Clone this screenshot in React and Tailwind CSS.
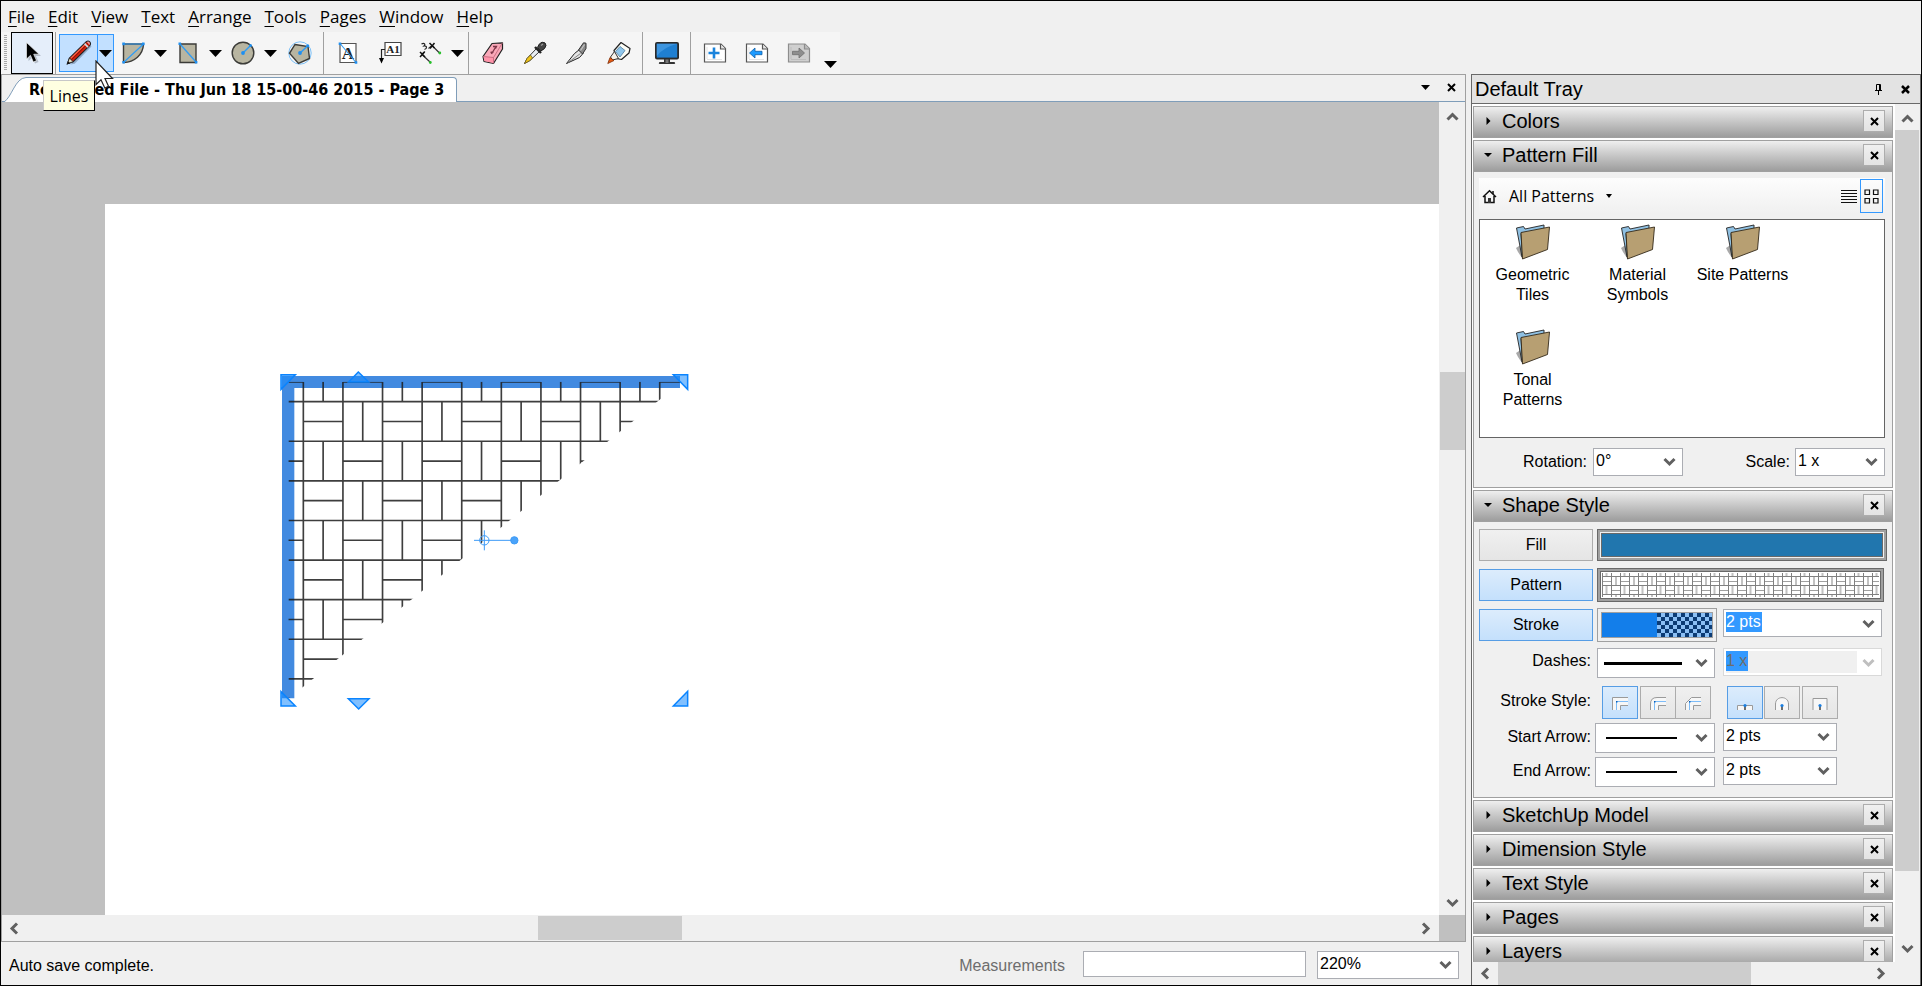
import React, { useState } from "react";

const ARIAL = "font-['Liberation_Sans',Arial,sans-serif]";
const SEGOE = "font-['Open_Sans','Segoe_UI',sans-serif]";

const MENUS = ["File", "Edit", "View", "Text", "Arrange", "Tools", "Pages", "Window", "Help"];
const FOLDERS = ["Geometric Tiles", "Material Symbols", "Site Patterns", "Tonal Patterns"];
const CLOSED_PANELS = ["SketchUp Model", "Dimension Style", "Text Style", "Pages", "Layers"];

/* ---------- small glyphs ---------- */

const CHEVRON_PATHS = {
  up: "M1.5 8.5 6.5 3.5 11.5 8.5",
  down: "M1.5 4 6.5 9 11.5 4",
  left: "M9 1.5 4 6.5 9 11.5",
  right: "M4 1.5 9 6.5 4 11.5",
};

const Chevron = ({ dir = "down", color = "#606060" }) => (
  <svg width="13" height="13" viewBox="0 0 13 13" fill="none" stroke={color} strokeWidth="3">
    <path d={CHEVRON_PATHS[dir]} />
  </svg>
);

const Cross = ({ size = 9, weight = 2 }) => (
  <svg width={size} height={size} viewBox="0 0 9 9" stroke="#000" strokeWidth={weight}>
    <path d="M1 1 8 8M8 1 1 8" />
  </svg>
);

const DropTriangle = ({ wide = 13, high = 7 }) => (
  <svg width={wide} height={high} viewBox="0 0 12 6" preserveAspectRatio="none">
    <path d="M0 0H12L6 6Z" fill="#000" />
  </svg>
);

/* ---------- toolbar icons ---------- */

const Icon = ({ children, size = 24 }) => (
  <svg width={size} height={size} viewBox="0 0 24 24" fill="none">
    {children}
  </svg>
);

const SelectIcon = () => (
  <Icon>
    <path d="M8.500 3v17l4-3.500 2.500 6 3.500-1.500-2.600-6H21z" fill="#b4bcc8" />
    <path d="M6.500 1.500v16.500l4-3.700 2.800 6.700 3.200-1.400-2.800-6.400h5.300z" fill="#000" stroke="#fff" strokeWidth=".6" />
  </Icon>
);

const PencilIcon = () => (
  <Icon size={26}>
    <path d="M4 22.500 22.500 4.500 23.500 6 8 22z" fill="#8fa9c6" />
    <path d="M1.200 22 3.200 16.600 18.700 1.600Q20.500.4 21.900 1.800 23.300 3.300 22 5L6.600 20z" fill="#d8210c" stroke="#222" strokeWidth="1" />
    <path d="M4.800 18.300 20.300 3.200" stroke="#8e1206" strokeWidth="1" />
    <path d="M4.400 16.900 17.500 4.200" stroke="#ff6a4d" strokeWidth="1" />
    <path d="m17.200 3.400 3.100 3.200" stroke="#d8dde2" strokeWidth="1.600" />
    <path d="M19.200 1.800Q20.700 1 21.600 2.100 22.600 3.300 21.700 4.600z" fill="#eb9ba0" />
    <path d="M1.200 22 3.200 16.600 6.600 20z" fill="#e6dfc0" stroke="#222" strokeWidth=".8" />
    <path d="M1 22.300 1.900 19.600 3.800 21.400z" fill="#111" />
  </Icon>
);

const ArcIcon = () => (
  <Icon>
    <path d="M2.500 3H22.500C22 14 13.500 21 2.500 21.500Z" fill="#b8b5a1" stroke="#3b3b38" strokeWidth="1.400" />
    <path d="M2.500 21.500 22.500 3M2.500 3H22.500" stroke="#2f9cf5" strokeWidth="1.200" />
    <path d="M1.300 1.600h2.600v2.600H1.300zM21 1.600h2.600v2.600H21zM1.300 20h2.600v2.600H1.300z" fill="#1f8ff0" />
  </Icon>
);

const RectIcon = () => (
  <Icon>
    <path d="M4 3H20V21.500H4Z" fill="#b8b5a1" stroke="#3b3b38" strokeWidth="1.400" />
    <path d="M4 3 20 21" stroke="#2f9cf5" strokeWidth="1.300" />
    <path d="M2.500 1.500h2.600v2.600H2.500zM18.800 20h2.600v2.600h-2.600z" fill="#1f8ff0" />
  </Icon>
);

const CircleIcon = () => (
  <Icon>
    <circle cx="12" cy="12" r="10.800" fill="#b8b5a1" stroke="#3b3b38" strokeWidth="1.400" />
    <path d="M12 12 19.500 4.500" stroke="#2f9cf5" strokeWidth="1.500" />
    <circle cx="12" cy="12" r="1.900" fill="#1f8ff0" />
    <circle cx="19.500" cy="4.500" r="1.500" fill="#1f8ff0" />
  </Icon>
);

const PolygonIcon = () => (
  <Icon>
    <circle cx="12" cy="12" r="11.200" stroke="#7cc0f7" strokeWidth="1" />
    <path d="M7 3.500 20 5.500 21.500 17.500 10.500 22.500 1.500 12.300Z" fill="#b8b5a1" stroke="#3b3b38" strokeWidth="1.400" />
    <path d="M12 12 19.800 4.700" stroke="#2f9cf5" strokeWidth="1.500" />
    <circle cx="12" cy="12" r="1.900" fill="#1f8ff0" />
    <circle cx="19.800" cy="4.700" r="1.500" fill="#1f8ff0" />
  </Icon>
);

const TextIcon = () => (
  <Icon>
    <path d="M4 2.500H20V21.500H4Z" fill="#fff" stroke="#555" strokeWidth="1.200" />
    <text x="12" y="18" textAnchor="middle" fontSize="17" fontFamily="Liberation Serif, serif" fontWeight="bold" fill="#222">A</text>
    <path d="M4 2.500 20 21.500" stroke="#2f9cf5" strokeWidth="1.100" />
    <path d="M2.700 1.500h2.600v2.600H2.700zM18.700 20.200h2.600v2.600h-2.600z" fill="#1f8ff0" />
  </Icon>
);

const LabelIcon = () => (
  <Icon>
    <path d="M7 1.500H23V14.500H7Z" fill="#fff" stroke="#444" strokeWidth="1.200" />
    <text x="15" y="12" textAnchor="middle" fontSize="11" fontFamily="Liberation Serif, serif" fontWeight="bold" fill="#222">A1</text>
    <path d="M7 8.500H3.500V18" stroke="#222" strokeWidth="1.200" />
    <path d="M1 17H6L3.500 22.500Z" fill="#000" />
  </Icon>
);

const DimensionIcon = () => (
  <Icon>
    <path d="M4 13 7 10.500M10.500 7.500 14 4.500M14 4.500 21.500 12M4 13.500 12 21" stroke="#333" strokeWidth="1.200" />
    <path d="m2 11 5 5m-5 0 4.500-5m5-9 5 5m-4.500.5L16.500 2" stroke="#111" strokeWidth="1.500" />
    <path d="M3.500 3C6 1.500 8 3 6 5 9 4.500 9.500 7.500 6.500 8.500" stroke="#222" strokeWidth="1.200" />
    <circle cx="21.800" cy="12" r="1.400" fill="#27c02b" />
    <circle cx="12.300" cy="21.500" r="1.400" fill="#27c02b" />
  </Icon>
);

const EraserIcon = () => (
  <Icon>
    <path d="M2 15.500 11 2.500 21.500 1.800 21.500 8 12.500 22.500 3 20.500Z" fill="#f9a8b8" stroke="#222" strokeWidth="1.200" strokeLinejoin="round" />
    <path d="M2.500 15.500 12.500 16.500 12.500 22 3.300 20Z" fill="#ff93a9" />
    <path d="M2 15.500 12.500 16.500 21.500 1.800M12.500 16.500V22.500" stroke="#c46a7e" strokeWidth=".9" />
    <path d="m10.500 13 4.500-7.500M12 5.500h3.500l-1 2M9.500 11.500l3-.500" stroke="#7d3547" strokeWidth="1.300" />
  </Icon>
);

const DropperIcon = () => (
  <Icon>
    <path d="M1.500 22.500 4 17.500 13.500 7.500 16.500 10.500 7 19.500Z" fill="#e9eef2" stroke="#333" strokeWidth="1" />
    <path d="M1.500 22.500 4 17.500 7.500 14 9.500 17 6.500 19.800Z" fill="#f0c419" stroke="#6b5a13" strokeWidth=".7" />
    <path d="m12 6 6 6" stroke="#222" strokeWidth="2.400" />
    <path d="M14.500 6.500Q16 2 19 1.200 23 1 23 4.500 22.500 8 17.800 10Z" fill="#444" stroke="#222" />
    <path d="M18 4.500 20 3" stroke="#9a9a9a" strokeWidth="1.300" />
  </Icon>
);

const KnifeIcon = () => (
  <Icon>
    <path d="M1.500 22.500 9.500 12.500 14.500 8.500 18 12.500 14.500 16.500Z" fill="#e4e4e4" stroke="#222" strokeWidth="1" />
    <path d="M2.500 22 15.500 12.500" stroke="#777" strokeWidth=".9" />
    <path d="M13.500 9 18.500 1.800 21 2.200V7.500L17.500 13Z" fill="#8a8a8a" stroke="#333" strokeWidth="1" />
    <path d="M15.500 9.500 19.500 3.500" stroke="#c9c9c9" strokeWidth="1.100" />
  </Icon>
);

const GlueIcon = () => (
  <Icon>
    <path d="M7 9.500 14 1.500 23 7.500 22 12 14.500 18.500 9.500 17.500Z" fill="#fdfdf6" stroke="#222" strokeWidth="1.200" strokeLinejoin="round" />
    <path d="M8.500 10.500 13 5.500 18 9.500 13 16Z" fill="#8fc6ec" stroke="#5d87a6" strokeWidth=".9" />
    <path d="M3.500 16 7.500 10.500 11.500 17.500 5.500 19Z" fill="#f7f2ea" stroke="#333" strokeWidth="1" />
    <path d="M.8 22.500 3 16.500 7 19.500Z" fill="#e85b13" stroke="#7b2c06" strokeWidth=".8" />
  </Icon>
);

const MonitorIcon = () => (
  <Icon>
    <rect x="0" y="1" width="24" height="17.500" rx="2" fill="#2a2a2a" />
    <rect x="1.800" y="2.800" width="20.400" height="13.800" fill="#1f7fd1" />
    <path d="M1.800 2.800H22.200Q9 6 1.800 15Z" fill="#3d95df" />
    <path d="M9 18h6v3h4.500q1.500 1.500 0 2h-15q-1.500-.5 0-2H9z" fill="#333" />
    <path d="M10.500 18.500h3V22h-3z" fill="#777" />
  </Icon>
);

const PageBase = ({ children, muted }) => (
  <Icon>
    <path d="M1.500 3H18l4.500 4.500V21H1.500Z" fill={muted ? "#cfcfcf" : "#fff"} stroke={muted ? "#8d8d8d" : "#555"} strokeWidth="1.200" />
    <path d="M17.500 3V8H22.500" fill={muted ? "#bcbcbc" : "#e6e6e6"} stroke={muted ? "#8d8d8d" : "#555"} strokeWidth="1.200" />
    <path d="M4 18.500h15M4 6v12" stroke={muted ? "#bdbdbd" : "#e3e3e3"} />
    {children}
  </Icon>
);

const AddPageIcon = () => (
  <PageBase>
    <path d="M11 6.500V17.500M5.500 12H16.500" stroke="#1a83dc" strokeWidth="2.600" />
  </PageBase>
);

const PrevPageIcon = () => (
  <PageBase>
    <path d="M4.500 12 10 7V10.300H17V13.700H10V17Z" fill="#1e9bff" stroke="#0f5fa8" strokeWidth=".8" />
  </PageBase>
);

const NextPageIcon = () => (
  <PageBase muted>
    <path d="M17.500 12 12 7V10.300H5.500V13.700H12V17Z" fill="#8e8e8e" stroke="#6f6f6f" strokeWidth=".8" />
  </PageBase>
);

/* ---------- toolbar ---------- */

const ToolButton = ({ label, children, disabled }) => (
  <button type="button" aria-label={label} disabled={disabled} className="flex h-[42px] w-[42px] items-center justify-center">
    {children}
  </button>
);

const SplitButton = ({ label, active, children }) => (
  <div className="flex h-[42px] items-center">
    <button
      type="button"
      aria-label={label}
      className={`flex h-[38px] w-[38px] items-center justify-center ${active ? "border-y border-l border-[#3399ff] bg-[#c2e0ff]" : ""}`}
    >
      {children}
    </button>
    <button
      type="button"
      aria-label={`${label} options`}
      className={`flex h-[38px] w-[17px] items-center justify-center ${active ? "border border-[#3399ff] bg-[#c2e0ff]" : ""}`}
    >
      <DropTriangle />
    </button>
  </div>
);

const Separator = () => <div className="mr-[3px] ml-[2px] h-full w-px bg-[#a0a0a0]" />;

const Toolbar = () => (
  <div className="flex h-[42px] w-[839px] items-center bg-[#f5f5f5]">
    <div className="mr-1 ml-[3px] h-9 w-[3px] bg-[repeating-linear-gradient(to_bottom,#a8a8a8_0_1px,#f5f5f5_1px_2px)]" />
    <button type="button" aria-label="Select" className="flex h-[42px] w-[42px] items-center justify-center border border-black bg-[#e5eefa]">
      <SelectIcon />
    </button>
    <Separator />
    <SplitButton label="Lines" active>
      <PencilIcon />
    </SplitButton>
    <SplitButton label="Arcs">
      <ArcIcon />
    </SplitButton>
    <SplitButton label="Rectangles">
      <RectIcon />
    </SplitButton>
    <SplitButton label="Circles">
      <CircleIcon />
    </SplitButton>
    <ToolButton label="Polygons">
      <PolygonIcon />
    </ToolButton>
    <Separator />
    <ToolButton label="Text">
      <TextIcon />
    </ToolButton>
    <ToolButton label="Label">
      <LabelIcon />
    </ToolButton>
    <SplitButton label="Dimensions">
      <DimensionIcon />
    </SplitButton>
    <Separator />
    <ToolButton label="Erase">
      <EraserIcon />
    </ToolButton>
    <ToolButton label="Style">
      <DropperIcon />
    </ToolButton>
    <ToolButton label="Split">
      <KnifeIcon />
    </ToolButton>
    <ToolButton label="Join">
      <GlueIcon />
    </ToolButton>
    <Separator />
    <ToolButton label="Start presentation">
      <MonitorIcon />
    </ToolButton>
    <Separator />
    <ToolButton label="Add page">
      <AddPageIcon />
    </ToolButton>
    <ToolButton label="Previous page">
      <PrevPageIcon />
    </ToolButton>
    <ToolButton label="Next page" disabled>
      <NextPageIcon />
    </ToolButton>
    <button type="button" aria-label="Toolbar options" className="flex h-full w-5 items-end justify-center pb-[6px]">
      <DropTriangle />
    </button>
  </div>
);

/* ---------- drawing ---------- */

// Basket weave, one cell is 118.8 units, three units to a pixel
const CELL = 118.8;
const weave = [];
for (let c = 0; c < 10; c++) {
  const x = 100 + c * CELL;
  weave.push(`M${x} 66V1020`);
}
for (let r = 0; r < 8; r++) {
  const y = 125 + r * CELL;
  weave.push(`M55 ${y}H1240`);
}
for (let r = -1; r < 8; r++) {
  for (let c = -1; c < 10; c++) {
    const x = 100 + c * CELL;
    const y = 125 + r * CELL;
    if ((r + c) % 2 === 0) {
      weave.push(`M${x} ${y + CELL / 2}h${CELL}`);
    } else {
      weave.push(`M${x + CELL / 2} ${y}v${CELL}`);
    }
  }
}

const Drawing = () => (
  <svg width="430" height="360" viewBox="0 0 1290 1080" fill="none" className="absolute top-[156px] left-[165px]">
    <clipPath id="triangle">
      <path d="M55 65H1236L55 1016Z" />
    </clipPath>
    <path d="M36 48H1230V84H73V1015H36Z" fill="#428ae0" />
    <path d={weave.join("")} stroke="#1c1c1c" strokeOpacity=".85" strokeWidth="5" clipPath="url(#triangle)" />
    <g fill="#1a8cff" fillOpacity=".55" stroke="#0a84ff" strokeWidth="4.500">
      <path d="M33 44H76L33 88Z" />
      <path d="M265 36 236 66H296Z" />
      <path d="M1210 44H1253V88Z" />
      <path d="M33 995V1038H76Z" />
      <path d="M235 1016H297L266 1047Z" />
      <path d="M1253 994V1038H1210Z" />
    </g>
    <g stroke="#3d9bf7" strokeWidth="3">
      <circle cx="643" cy="541" r="14" />
      <path d="M612 541H733M643 511V571" />
      <circle cx="733" cy="541" r="11" fill="#4aa3fa" />
    </g>
  </svg>
);

const ScrollButton = ({ dir, className }) => (
  <button type="button" aria-label={`Scroll ${dir}`} className={`flex shrink-0 items-center justify-center ${className}`}>
    <Chevron dir={dir} />
  </button>
);

const DocumentView = () => (
  <section className="flex min-h-0 flex-1 flex-col border border-[#a0a0a0]">
    <div className="flex h-[27px] shrink-0 items-end border-b border-[#7f9db9]">
      <div className="-mb-px ml-[2px] flex h-[25px]">
        <svg width="22" height="25" viewBox="0 0 22 25">
          <path d="M0 25C8 20 11 1 22 .5V25Z" fill="#fff" />
          <path d="M0 25C8 20 11 1 22 .5" fill="none" stroke="#7f9db9" />
        </svg>
        <div className="flex items-center rounded-tr border-t border-r border-[#7f9db9] bg-white pr-3 pb-px pl-[3px] font-['DejaVu_Sans_Condensed','DejaVu_Sans',Tahoma,sans-serif] text-base leading-5 font-bold whitespace-nowrap">
          Recovered File - Thu Jun 18 15-00-46 2015 - Page 3
        </div>
      </div>
      <div className="ml-auto flex h-full items-center gap-[17px] pr-[9px] pb-[2px]">
        <button type="button" aria-label="Open documents">
          <DropTriangle wide={9} high={5} />
        </button>
        <button type="button" aria-label="Close document">
          <Cross />
        </button>
      </div>
    </div>
    <div className="flex min-h-0 flex-1">
      <div className="flex min-w-0 flex-1 flex-col">
        <div className="min-h-0 flex-1 overflow-hidden bg-[#c0c0c0] pt-[102px] pl-[103px]">
          <div className="relative h-full bg-white">
            <Drawing />
          </div>
        </div>
        <div className="flex h-[26px] items-center bg-[#f0f0f0]">
          <ScrollButton dir="left" className="h-full w-6" />
          <div className="flex h-6 flex-1">
            <div className="h-full w-[37%]" />
            <div className="h-full w-[144px] bg-[#cdcdcd]" />
          </div>
          <ScrollButton dir="right" className="h-full w-7" />
        </div>
      </div>
      <div className="flex w-[26px] flex-col bg-[#f0f0f0]">
        <ScrollButton dir="up" className="h-[30px]" />
        <div className="flex flex-1 flex-col items-end pt-60">
          <div className="h-[78px] w-[25px] bg-[#cdcdcd]" />
        </div>
        <ScrollButton dir="down" className="h-[26px]" />
        <div className="h-[26px] bg-[#c0c0c0]" />
      </div>
    </div>
  </section>
);

/* ---------- form pieces ---------- */

const Select = ({ id, label, value, options, className }) => {
  const [current, setCurrent] = useState(value);
  return (
    <div className={`relative h-7 border border-[#abadb3] bg-white ${className}`}>
      <select
        id={id}
        aria-label={label}
        value={current}
        onChange={(e) => setCurrent(e.target.value)}
        className="h-[23px] w-full appearance-none bg-transparent px-[2px] text-base leading-5 outline-none"
      >
        {options.map((o) => (
          <option key={o}>{o}</option>
        ))}
      </select>
      <span className="pointer-events-none absolute top-[6px] right-[6px]">
        <Chevron />
      </span>
    </div>
  );
};

// Drop-down whose value is drawn as a line
const LineSelect = ({ id, thick, className }) => (
  <div className={`relative h-[30px] border border-[#abadb3] bg-white ${className}`}>
    <select id={id} className="h-full w-full appearance-none bg-transparent outline-none">
      <option value="solid" aria-label="Solid" />
    </select>
    <span className={`pointer-events-none absolute top-[13px] bg-black ${thick ? "right-8 h-[3px] w-[78px]" : "right-[37px] h-[2px] w-[71px]"}`} />
    <span className="pointer-events-none absolute top-[7px] right-[6px]">
      <Chevron />
    </span>
  </div>
);

// Editable combo box with its text selected
const Combo = ({ label, value, disabled }) => (
  <div className={`flex h-7 w-[159px] border bg-white p-[2px] ${disabled ? "border-[#d9d9d9]" : "border-[#abadb3]"}`}>
    <div className={`flex-1 ${disabled ? "bg-[#f0f0f0]" : ""}`}>
      <input
        aria-label={label}
        defaultValue={value}
        disabled={disabled}
        className={`block h-5 bg-[#3399ff] text-base leading-5 outline-none ${disabled ? "w-[22px] text-[#6d6d6d]" : "w-9 text-white"}`}
      />
    </div>
    <button type="button" aria-label={`${label} list`} disabled={disabled} className="flex w-[22px] items-center justify-center">
      <Chevron color={disabled ? "#bfbfbf" : "#606060"} />
    </button>
  </div>
);

const ToggleButton = ({ on, children }) => (
  <button
    type="button"
    aria-pressed={on}
    className={`h-8 w-[114px] border bg-linear-to-b text-base ${
      on ? "border-[#569de5] from-[#dcecfc] to-[#c4e0fc]" : "border-[#acacac] from-[#f0f0f0] to-[#e5e5e5]"
    }`}
  >
    {children}
  </button>
);

const StyleButton = ({ label, on, className = "", children }) => (
  <button
    type="button"
    aria-label={label}
    aria-pressed={on}
    className={`flex h-[33px] w-9 items-center justify-center border bg-linear-to-b pt-px ${
      on ? "border-[#569de5] from-[#dcecfc] to-[#c4e0fc]" : "border-[#acacac] from-[#f0f0f0] to-[#e5e5e5]"
    } ${className}`}
  >
    <svg width="18" height="15" viewBox="0 0 18 15" fill="none">
      {children}
    </svg>
  </button>
);

const JoinGlyph = ({ outer }) => (
  <>
    <path d={`${outer}V9.500H9.500V14Z`} fill="#f7f7f7" />
    <path d={outer} stroke="#9a9a9a" />
    <path d="M17 9.500H9.500V14" stroke="#9a9a9a" />
    <path d="M5.500 14V5.500H17" stroke="#7dbcf8" />
    <path d="M5 5h1.500v1.500H5z" fill="#0b5fb5" />
  </>
);

const CapGlyph = ({ outer }) => (
  <>
    <path d={outer} fill="#f7f7f7" stroke="#9a9a9a" />
    <path d="M9 9V14" stroke="#111" strokeWidth="1.200" />
    <circle cx="9" cy="9.500" r="1.600" fill="#1b7fe0" />
  </>
);

/* ---------- tray ---------- */

const PanelHeader = ({ title, open }) => (
  <header className="flex h-8 items-center border border-[#a0a0a0] bg-linear-to-b from-[#efefef] to-[#9d9d9d] pr-[7px] pb-[2px] pl-[10px]">
    <button type="button" aria-expanded={!!open} className="flex flex-1 items-center text-left">
      <svg width="8" height="8" viewBox="0 0 8 8">
        <path d={open ? "M0 2H8L4 6Z" : "M2.500 0V8L6.500 4Z"} fill="#000" />
      </svg>
      <span className="ml-[10px] text-xl leading-6">{title}</span>
    </button>
    <button type="button" aria-label={`Close ${title}`} className="flex h-[22px] w-[22px] items-center justify-center border border-[#adadad] bg-linear-to-b from-[#f0f0f0] to-[#e3e3e3]">
      <Cross />
    </button>
  </header>
);

const Folder = () => (
  <svg width="36" height="36" viewBox="0 0 36 36">
    <path d="M1 24 7 20V34L3 28Z" fill="#a9a9a9" />
    <path d="M1.500 4 8.500 2.500 10 5 29 1V22L7 33Z" fill="#8fc0e2" stroke="#222" strokeWidth=".9" />
    <path d="M5.500 9.500 8 8 8.500 34 7 33Z" fill="#222" />
    <path d="M6 8.500 34.500 3 32.500 25.500 7.500 35Z" fill="#b79f72" stroke="#33291a" strokeWidth=".9" />
  </svg>
);

const PatternFill = () => (
  <div className="h-[316px] border-x border-b border-[#a0a0a0] bg-[#f0f0f0] pt-[6px] pr-[7px] pl-[5px]">
    <div className="flex h-9 items-center bg-linear-to-b from-[#fdfdfd] to-[#f0f0f0] pl-[3px]">
      <button type="button" aria-label="Home">
        <svg width="15" height="15" viewBox="0 0 15 15" fill="none" stroke="#111" strokeWidth="1.500">
          <path d="M1 8 7.500 1.800 14 8M3 7V13.500H12V7" />
          <path d="M11 2V5" />
          <path d="M6 9h3v5H6z" fill="#333" stroke="none" />
        </svg>
      </button>
      <button type="button" className={`ml-3 flex items-center gap-3 text-base leading-6 ${SEGOE}`}>
        All Patterns
        <DropTriangle wide={6} high={4} />
      </button>
      <button type="button" aria-label="List view" className="mr-[3px] ml-auto">
        <svg width="16" height="15" viewBox="0 0 16 15" stroke="#111" strokeWidth="1.200">
          <path d="M0 1.500H16M0 4.500H16M0 7.500H16M0 10.500H16M0 13.500H16" />
        </svg>
      </button>
      <button type="button" aria-label="Thumbnail view" className="mr-[2px] flex h-[34px] w-[23px] items-center justify-center border border-[#3399ff]">
        <svg width="15" height="15" viewBox="0 0 15 15" fill="none" stroke="#111" strokeWidth="1.200">
          <path d="M1 1h4.500v4.500H1zM9.500 1H14v4.500H9.500zM1 9.500h4.500V14H1zM9.500 9.500H14V14H9.500z" />
        </svg>
      </button>
    </div>
    <ul className="mt-[5px] grid h-[219px] auto-rows-[105px] grid-cols-[repeat(auto-fill,105px)] border border-[#646464] bg-white">
      {FOLDERS.map((name) => (
        <li key={name} className="flex flex-col items-center px-3 pt-1 text-center">
          <Folder />
          <span className="mt-[5px] -mx-3 max-w-24 text-base leading-5">{name}</span>
        </li>
      ))}
    </ul>
    <div className="mt-[10px] flex items-center text-base">
      <label htmlFor="rotation" className="ml-11 w-[70px]">
        Rotation:
      </label>
      <Select id="rotation" value="0°" options={["0°", "45°", "90°"]} className="w-[90px]" />
      <label htmlFor="scale" className="mr-[5px] ml-auto">
        Scale:
      </label>
      <Select id="scale" value="1 x" options={["1 x", "2 x", "4 x"]} className="w-[90px]" />
    </div>
  </div>
);

const PatternSwatch = () => (
  <svg width="100%" height="24">
    <pattern id="basket" width="18" height="18" patternUnits="userSpaceOnUse">
      <path d="M.5 0V18M9.500 0V18M0 3.500H18M0 12.500H18" stroke="#808080" />
      <path d="M4.500 0V3M4.500 13V18M14 4V12" stroke="#c2c2c2" strokeWidth="2" />
      <path d="M1 8.500H9M10 17.500H18" stroke="#a0a0a0" />
    </pattern>
    <rect width="100%" height="24" fill="url(#basket)" />
  </svg>
);

const ShapeStyle = () => (
  <div className="h-[276px] border-x border-b border-[#a0a0a0] bg-[#f0f0f0] pt-[3px] pl-[5px] text-base">
    <div className="flex h-10 items-center gap-1">
      <ToggleButton>Fill</ToggleButton>
      <button type="button" aria-label="Fill color" className="h-8 w-[290px] border border-[#696969] bg-[#a0a0a0] p-[2px]">
        <span className="block h-full border border-[#f0f0f0] bg-[#2176ae] outline -outline-offset-2 outline-[#696969]" />
      </button>
    </div>
    <div className="flex h-10 items-center gap-1">
      <ToggleButton on>Pattern</ToggleButton>
      <button type="button" aria-label="Fill pattern" className="h-[34px] w-[287px] border border-[#696969] bg-[#a0a0a0] p-[2px]">
        <span className="block h-full overflow-hidden border border-[#696969] bg-white p-px">
          <PatternSwatch />
        </span>
      </button>
    </div>
    <div className="flex h-10 items-center gap-1">
      <ToggleButton on>Stroke</ToggleButton>
      <button type="button" aria-label="Stroke color" className="h-[34px] w-[120px] border border-[#a0a0a0] p-[3px]">
        <span className="flex h-full border border-[#a0a0a0]">
          <span className="flex-1 bg-[#137eea]" />
          <span className="flex-1 bg-[repeating-conic-gradient(#8cc0f5_0_25%,#0c3c75_0_50%)] bg-[length:8px_8px]" />
        </span>
      </button>
      <div className="-mt-1 ml-[2px]">
        <Combo label="Stroke width" value="2 pts" />
      </div>
    </div>
    <div className="mt-[3px] flex h-[38px] items-start">
      <label htmlFor="dashes" className="mr-[6px] w-[112px] text-right leading-[26px]">
        Dashes:
      </label>
      <LineSelect id="dashes" thick className="mr-2 w-[118px]" />
      <Combo label="Dash scale" value="1 x" disabled />
    </div>
    <div className="flex h-[37px] items-start">
      <span className="mr-[11px] w-[112px] text-right leading-[30px]">Stroke Style:</span>
      <StyleButton label="Miter join" on className="mr-[2px]">
        <JoinGlyph outer="M1.500 14V1.500H17" />
      </StyleButton>
      <StyleButton label="Round join">
        <JoinGlyph outer="M1.500 14V8Q1.500 1.500 8 1.500H17" />
      </StyleButton>
      <StyleButton label="Bevel join" className="-ml-px">
        <JoinGlyph outer="M1.500 14V7.500L7.500 1.500H17" />
      </StyleButton>
      <StyleButton label="Flat cap" on className="mr-px ml-4">
        <CapGlyph outer="M1.500 14V9.500H16.500V14" />
      </StyleButton>
      <StyleButton label="Round cap" className="mr-[2px]">
        <CapGlyph outer="M2.500 14V8C2.500-.5 15.500-.5 15.500 8V14" />
      </StyleButton>
      <StyleButton label="Square cap">
        <CapGlyph outer="M2 14V2.500H16V14" />
      </StyleButton>
    </div>
    {["Start Arrow", "End Arrow"].map((name) => (
      <div key={name} className="flex h-[34px] items-start">
        <label htmlFor={name} className="mr-1 w-[112px] text-right leading-7">
          {name}:
        </label>
        <LineSelect id={name} className="mr-2 w-[120px]" />
        <Select label={`${name} size`} value="2 pts" options={["1 pt", "2 pts", "3 pts"]} className="w-[114px]" />
      </div>
    ))}
  </div>
);

const Tray = () => (
  <aside className="flex w-[450px] shrink-0 flex-col border-t border-r border-l border-[#696969]">
    <div className="flex h-[29px] shrink-0 items-center border-b border-[#696969] bg-[#e3e3e3] pr-[10px] pl-[3px]">
      <h2 className="flex-1 text-xl leading-6">Default Tray</h2>
      <button type="button" aria-label="Auto hide" className="mr-[18px]">
        <svg width="9" height="11" viewBox="0 0 9 11" fill="none" stroke="#000">
          <path d="M2.500 6.500V.5H6.500V6.500M1 6.500H8M4.500 7V11M5.500 1V6" />
        </svg>
      </button>
      <button type="button" aria-label="Close tray">
        <Cross weight={2.5} />
      </button>
    </div>
    <div className="flex min-h-0 flex-1">
      <div className="flex min-h-0 flex-1 flex-col overflow-hidden bg-white">
        <div className="flex min-h-0 flex-1 flex-col gap-[2px] overflow-hidden pt-[2px] pr-[2px] pl-px *:shrink-0">
          <PanelHeader title="Colors" />
          <div>
            <PanelHeader title="Pattern Fill" open />
            <PatternFill />
          </div>
          <div>
            <PanelHeader title="Shape Style" open />
            <ShapeStyle />
          </div>
          {CLOSED_PANELS.map((name) => (
            <PanelHeader key={name} title={name} />
          ))}
        </div>
        <div className="flex h-[23px] shrink-0 bg-[#f0f0f0]">
          <ScrollButton dir="left" className="w-[26px]" />
          <div className="flex flex-1">
            <div className="h-full w-[253px] bg-[#cdcdcd]" />
          </div>
          <ScrollButton dir="right" className="w-[30px]" />
        </div>
      </div>
      <div className="mr-px flex w-6 flex-col bg-[#f0f0f0]">
        <ScrollButton dir="up" className="h-[26px] pt-1" />
        <div className="flex-1">
          <div className="h-[92%] bg-[#cdcdcd]" />
        </div>
        <ScrollButton dir="down" className="h-[26px]" />
        <div className="h-6" />
      </div>
    </div>
  </aside>
);

const StatusBar = () => (
  <footer className="flex h-[43px] shrink-0 items-start pt-[9px] pr-[7px] pl-2 text-base">
    <span className="flex-1 leading-[30px]">Auto save complete.</span>
    <label htmlFor="measurements" className="mr-[18px] leading-[30px] text-[#6d6d6d]">
      Measurements
    </label>
    <input id="measurements" className="mr-[11px] h-[26px] w-[223px] border border-[#abadb3] bg-white px-1 outline-none" />
    <Select label="Zoom" value="220%" options={["100%", "220%", "400%"]} className="w-[142px]" />
  </footer>
);

const App = () => {
  return (
    <div className={`relative flex h-screen w-full flex-col overflow-hidden border border-black bg-[#f0f0f0] text-black ${ARIAL}`}>
      <nav className={`flex h-[31px] shrink-0 items-center gap-[13px] pl-[7px] text-[17px] leading-6 ${SEGOE}`}>
        {MENUS.map((name) => (
          <button key={name} type="button">
            <span className="underline underline-offset-[3px]">{name[0]}</span>
            {name.slice(1)}
          </button>
        ))}
      </nav>
      <Toolbar />
      <div className="flex min-h-0 flex-1 gap-[5px]">
        <main className="flex min-w-0 flex-1 flex-col">
          <DocumentView />
          <StatusBar />
        </main>
        <Tray />
      </div>

      {/* Tooltip and pointer over the Lines tool */}
      <div role="tooltip" className={`absolute top-[79px] left-[42px] flex h-[31px] w-[52px] items-center justify-center border border-t-[#c8c8c8] border-r-black border-b-black border-l-[#c8c8c8] bg-[#ffffe1] text-base leading-6 ${SEGOE}`}>
        Lines
      </div>
      <svg width="20" height="30" viewBox="0 0 20 30" className="absolute top-[59px] left-[94px]">
        <path d="M1 1V24.500L6 19.800 9.800 28 13.500 26.300 10 18.500H17.500Z" fill="#fff" stroke="#222" strokeWidth="1.200" />
      </svg>
    </div>
  );
};

export default App;
